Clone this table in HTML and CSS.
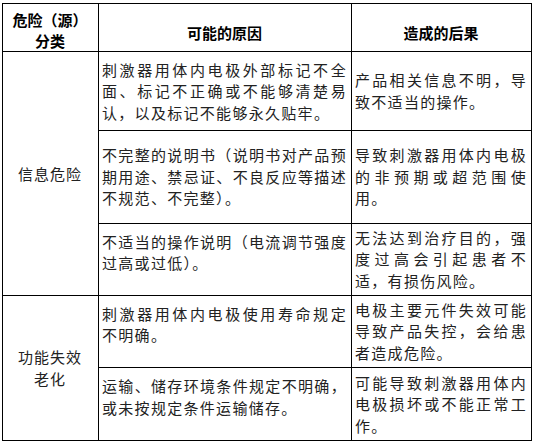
FILE: index.html
```html
<!DOCTYPE html>
<html lang="zh">
<head>
<meta charset="utf-8">
<title>危险分析</title>
<link rel="stylesheet" href="styles.css">
</head>
<body>
<table class="risk">
  <colgroup>
    <col class="c1">
    <col class="c2">
    <col class="c3">
  </colgroup>
  <thead>
    <tr class="r-head">
      <th class="cat-h"><span class="hl">危险（源）</span><span class="hl">分类</span></th>
      <th class="mid-h">可能的原因</th>
      <th class="mid-h">造成的后果</th>
    </tr>
  </thead>
  <tbody>
    <tr class="r1">
      <td class="cat" rowspan="3">信息危险</td>
      <td class="txt">
        <span class="ln">刺激器用体内电极外部标记不全</span>
        <span class="ln">面、标记不正确或不能够清楚易</span>
        <span class="ln last">认，以及标记不能够永久贴牢。</span>
      </td>
      <td class="txt res">
        <span class="ln">产品相关信息不明，导</span>
        <span class="ln last">致不适当的操作。</span>
      </td>
    </tr>
    <tr class="r2">
      <td class="txt">
        <span class="ln">不完整的说明书（说明书对产品预</span>
        <span class="ln">期用途、禁忌证、不良反应等描述</span>
        <span class="ln last">不规范、不完整）。</span>
      </td>
      <td class="txt res">
        <span class="ln">导致刺激器用体内电极</span>
        <span class="ln">的非预期或超范围使</span>
        <span class="ln last">用。</span>
      </td>
    </tr>
    <tr class="r3">
      <td class="txt lift">
        <span class="ln">不适当的操作说明（电流调节强度</span>
        <span class="ln last">过高或过低）。</span>
      </td>
      <td class="txt res">
        <span class="ln">无法达到治疗目的，强</span>
        <span class="ln">度过高会引起患者不</span>
        <span class="ln last">适，有损伤风险。</span>
      </td>
    </tr>
    <tr class="r4">
      <td class="cat" rowspan="2"><span class="hl">功能失效</span><span class="hl">老化</span></td>
      <td class="txt lift">
        <span class="ln">刺激器用体内电极使用寿命规定</span>
        <span class="ln last">不明确。</span>
      </td>
      <td class="txt res">
        <span class="ln">电极主要元件失效可能</span>
        <span class="ln">导致产品失控，会给患</span>
        <span class="ln last">者造成危险。</span>
      </td>
    </tr>
    <tr class="r5">
      <td class="txt lift">
        <span class="ln">运输、储存环境条件规定不明确，</span>
        <span class="ln last">或未按规定条件运输储存。</span>
      </td>
      <td class="txt res">
        <span class="ln">可能导致刺激器用体内</span>
        <span class="ln">电极损坏或不能正常工</span>
        <span class="ln last">作。</span>
      </td>
    </tr>
  </tbody>
</table>
</body>
</html>
```
FILE: styles.css
```css
html, body {
  margin: 0;
  padding: 0;
  background: #fff;
}

body {
  font-family: "Noto Sans CJK SC", "Noto Sans", sans-serif;
  color: #222;
}

.risk {
  border-collapse: collapse;
  table-layout: fixed;
  width: 529px;
  margin: 3px 0 0 2px;
  font-size: 15px;
  line-height: 21.5px;
}

.c1 { width: 96px; }
.c2 { width: 253px; }
.c3 { width: 180px; }

.risk th,
.risk td {
  border: 1px solid #000;
  padding: 0 4px 0 3px;
  vertical-align: middle;
}

.risk th {
  font-weight: 700;
  color: #000;
  text-align: center;
  line-height: 20px;
}

.risk th.cat-h {
  padding-top: 5px;
}

.risk th.mid-h {
  padding-top: 10px;
}

.r-head { height: 47px; }
.r1 { height: 78.5px; }
.r2 { height: 93px; }
.r3 { height: 72px; }
.r4 { height: 72px; }
.r5 { height: 73.5px; }

.hl {
  display: block;
}

.cat-h .hl {
  line-height: 21px;
}

.cat {
  text-align: center;
  letter-spacing: 1px;
}

.txt {
  letter-spacing: 1.3px;
}

.txt.lift {
  padding-bottom: 14px;
}

.res {
  padding-left: 4px;
}

.ln {
  display: block;
  white-space: nowrap;
  text-align: justify;
  text-align-last: justify;
}

.ln.last {
  text-align-last: left;
}
```
